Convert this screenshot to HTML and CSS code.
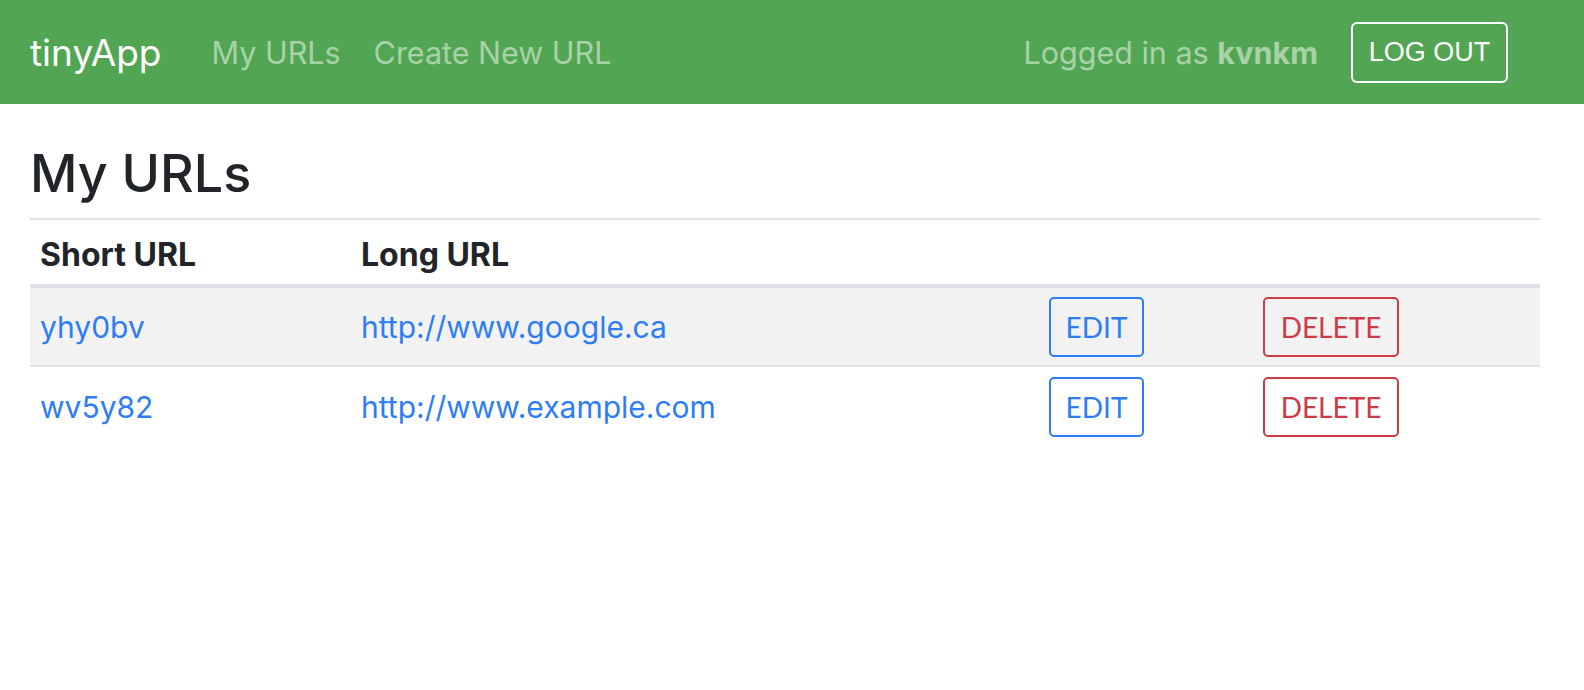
FILE: index.html
```html
<!DOCTYPE html>
<html>
<head>
<meta charset="utf-8">
<link rel="stylesheet" href="styles.css">
</head>
<body>
<nav class="navbar">
  <div class="nav-left">
    <a class="brand" href="#">tinyApp</a>
    <a class="nav-link" href="#">My URLs</a>
    <a class="nav-link" href="#">Create New URL</a>
  </div>
  <div class="nav-right">
    <span class="user">Logged in as <b>kvnkm</b></span>
    <button class="btn-logout">LOG OUT</button>
  </div>
</nav>
<main class="container">
  <h1 class="title">My URLs</h1>
  <table class="urls">
    <colgroup>
      <col class="c1"><col class="c2"><col class="c3"><col class="c4">
    </colgroup>
    <thead>
      <tr>
        <th>Short URL</th>
        <th>Long URL</th>
        <th></th>
        <th></th>
      </tr>
    </thead>
    <tbody>
      <tr class="striped">
        <td><a href="#">yhy0bv</a></td>
        <td><a href="#">http://www.google.ca</a></td>
        <td><button class="btn btn-edit">EDIT</button></td>
        <td><button class="btn btn-delete">DELETE</button></td>
      </tr>
      <tr>
        <td><a href="#">wv5y82</a></td>
        <td><a href="#">http://www.example.com</a></td>
        <td><button class="btn btn-edit">EDIT</button></td>
        <td><button class="btn btn-delete">DELETE</button></td>
      </tr>
    </tbody>
  </table>
</main>
</body>
</html>
```
FILE: styles.css
```css
* { box-sizing: border-box; }
html, body { margin: 0; padding: 0; background: #fff; }
body {
  font-family: "Inter", "Roboto", sans-serif;
  color: #212529;
}
a { text-decoration: none; }

.navbar {
  height: 104px;
  background: #52a552;
  display: flex;
  align-items: center;
  justify-content: space-between;
  padding: 0 76px 0 30px;
}
.nav-left, .nav-right { display: flex; align-items: center; }
.brand {
  color: #fff;
  font-size: 37px;
  margin-right: 50px;
}
.nav-link {
  color: rgba(255,255,255,0.5);
  font-size: 30.5px;
  margin-right: 33px;
}
.user {
  color: rgba(255,255,255,0.5);
  font-size: 30.5px;
  margin-right: 33px;
}
.user b { font-weight: 700; }
.btn-logout {
  font-family: "Liberation Sans", Arial, sans-serif;
  font-size: 27px;
  color: #fff;
  background: transparent;
  border: 2px solid #fff;
  border-radius: 6px;
  width: 157px;
  height: 61px;
  padding: 0;
}

.container { padding: 0 44px 0 30px; }
.title {
  font-size: 52px;
  font-weight: 500;
  margin: 0;
  height: 114px;
  line-height: 140px;
}
.urls {
  width: 100%;
  table-layout: fixed;
  border-collapse: collapse;
  border-top: 2px solid #dee2e6;
  font-size: 30px;
}
.c1 { width: 321px; }
.c2 { width: 688px; }
.c3 { width: 214px; }
.urls th, .urls td {
  text-align: left;
  padding: 0 10px;
  vertical-align: middle;
}
.urls th {
  font-weight: 700;
  font-size: 32px;
  height: 67px;
  border-bottom: 4px solid #dee2e6;
  padding-top: 5px;
}
.urls td { height: 80px; border-bottom: 2px solid #dee2e6; }
.urls tbody tr:last-child td { border-bottom: none; }
.urls td a { color: #2f7df4; }
.striped td { background: #f2f2f2; }

.btn {
  font-family: "Lato", sans-serif;
  font-size: 28px;
  background: transparent;
  border-radius: 5px;
  height: 60px;
  padding: 0;
}
.btn-edit { color: #2f7df4; border: 2px solid #2f7df4; width: 95px; }
.btn-delete { color: #cd3c45; border: 2px solid #cd3c45; width: 136px; }
```
